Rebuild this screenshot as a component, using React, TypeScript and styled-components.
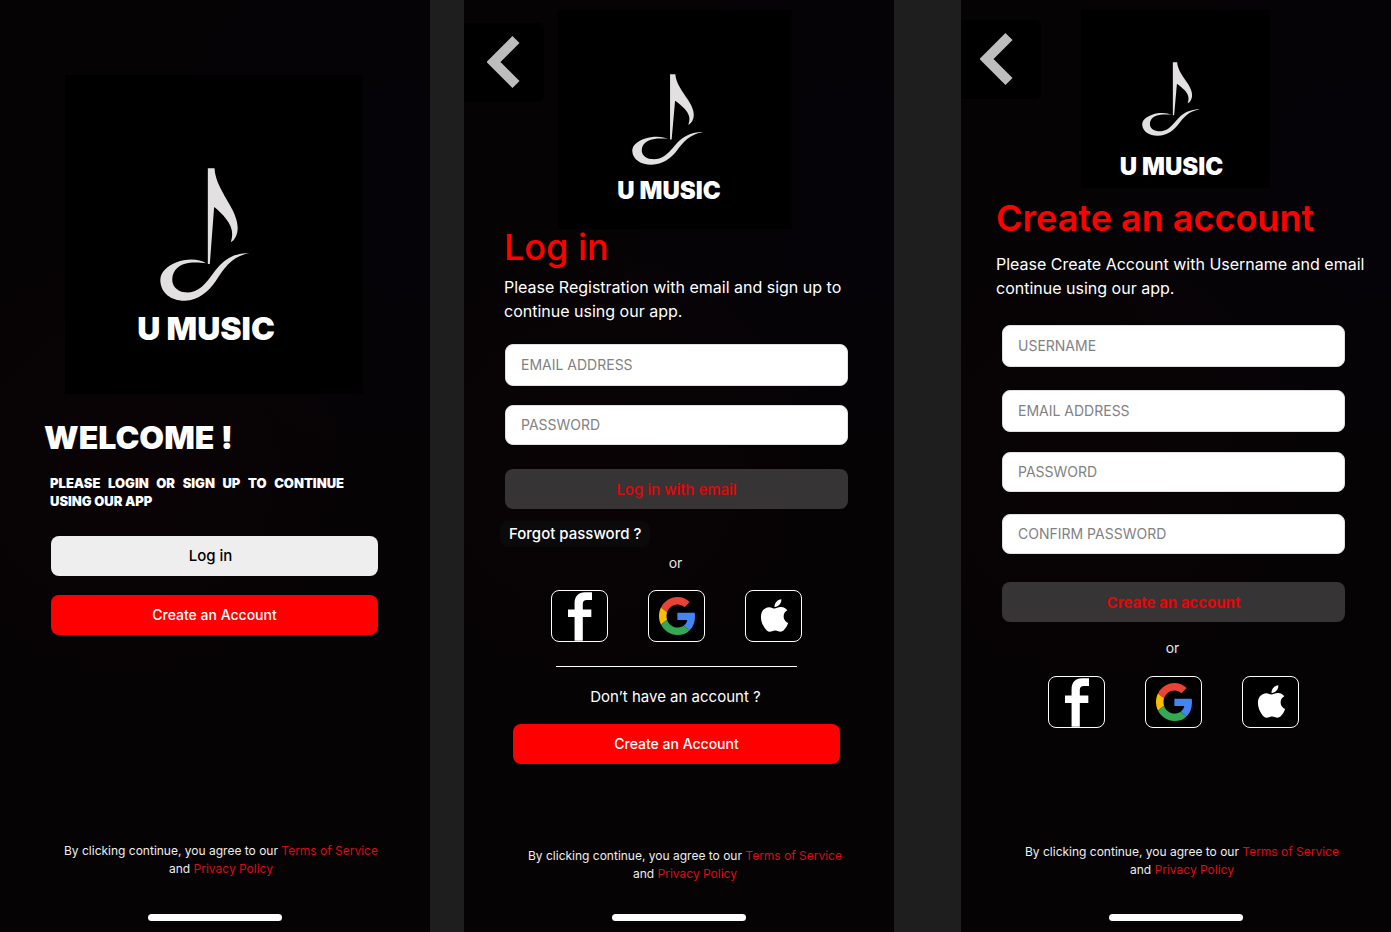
import React from "react";
import styled, { createGlobalStyle } from "styled-components";
import { FaApple } from "react-icons/fa";

const GlobalStyle = createGlobalStyle`
  *, *::before, *::after { box-sizing: border-box; }
  body {
    margin: 0;
    background: #1e1e1e;
    color: #fff;
    font-family: Inter, "Liberation Sans", sans-serif;
  }
  h1, h2, p { margin: 0; }
  button, input { font: inherit; }
`;

const Board = styled.div`
  display: flex;
  min-height: 100vh;
`;

const Screen = styled.main<{ $gap?: number }>`
  flex: 1 1 0;
  min-width: 0;
  margin-left: ${(p) => p.$gap ?? 0}px;
  display: flex;
  flex-direction: column;
  background:
    radial-gradient(circle at 30% 50%, rgba(40, 0, 10, 0.12), transparent 45%),
    radial-gradient(circle at 95% 20%, rgba(0, 0, 30, 0.12), transparent 40%),
    #060305;
`;

const TopBar = styled.header`
  display: grid;
  grid-template-columns: 1fr auto 1fr;
  align-items: start;
  padding-top: 10px;
`;

const BackButton = styled.button<{ $top: number; $indent: number }>`
  width: 80px;
  height: 79px;
  margin-top: ${(p) => p.$top}px;
  padding: 0 0 2px ${(p) => p.$indent}px;
  border: 0;
  border-radius: 0 6px 6px 0;
  background: #000;
  display: flex;
  align-items: center;
  cursor: pointer;
`;

const LogoBox = styled.div<{ $w: number; $h: number; $bottom: number; $right: number; $shift: number }>`
  width: ${(p) => p.$w}px;
  height: ${(p) => p.$h}px;
  margin-right: ${(p) => p.$shift}px;
  padding: 0 ${(p) => p.$right}px ${(p) => p.$bottom}px 0;
  background: #000;
  display: flex;
  flex-direction: column;
  align-items: center;
  justify-content: flex-end;
`;

const Wordmark = styled.span<{ $size: number; $gap: number }>`
  margin-top: ${(p) => p.$gap}px;
  font-size: ${(p) => p.$size}px;
  line-height: ${(p) => p.$size}px;
  font-weight: 900;
  white-space: nowrap;
`;

const WelcomeHero = styled.div`
  display: flex;
  justify-content: center;
  padding-top: 75px;
`;

const WelcomeBody = styled.section`
  padding: 24px 52px 0 51px;
  display: flex;
  flex-direction: column;
`;

const WelcomeTitle = styled.h1`
  margin-left: -7px;
  font-size: 32px;
  line-height: 40px;
  font-weight: 900;
`;

const WelcomeText = styled.p`
  margin: 16px 34px 26px -1px;
  font-size: 13px;
  line-height: 18px;
  font-weight: 900;
  text-align: justify;
`;

const Intro = styled.section<{ $left: number; $top: number; $gap: number; $weight: number }>`
  padding: ${(p) => p.$top}px 20px 0 ${(p) => p.$left}px;

  h1 {
    font-size: 36px;
    line-height: 36px;
    font-weight: ${(p) => p.$weight};
    color: #f00;
  }
  p {
    margin-top: ${(p) => p.$gap}px;
    font-size: 16px;
    line-height: 24px;
  }
`;

const Form = styled.form<{ $top: number }>`
  padding: ${(p) => p.$top}px 46px 0 41px;
  display: flex;
  flex-direction: column;
`;

const Field = styled.input<{ $tall?: boolean; $gap?: number }>`
  width: 100%;
  height: ${(p) => (p.$tall ? 42 : 40)}px;
  margin-top: ${(p) => p.$gap ?? 0}px;
  padding: 0 15px 2px;
  border: 1px solid #e0e0e0;
  border-radius: 8px;
  background: #fff;
  color: #111;
  font-size: 14px;

  &::placeholder {
    color: #828282;
    opacity: 1;
  }
`;

const buttonPadding = { light: "0 24px 2px 16px", red: "0 16px 2px", dark: "0 16px" };

const Button = styled.button<{ $tone: "light" | "red" | "dark"; $top?: number; $bold?: boolean }>`
  width: 100%;
  height: 40px;
  margin-top: ${(p) => p.$top ?? 0}px;
  padding: ${(p) => buttonPadding[p.$tone]};
  border: 0;
  border-radius: 8px;
  cursor: pointer;
  font-size: ${(p) => (p.$tone === "red" ? 14 : 15)}px;
  font-weight: ${(p) => (p.$bold ? 700 : 500)};
  background: ${(p) => ({ light: "#eee", red: "#f00", dark: "#363435" })[p.$tone]};
  color: ${(p) => ({ light: "#000", red: "#fff", dark: "#e60508" })[p.$tone]};
`;

const ForgotLink = styled.a`
  align-self: flex-start;
  margin: 12px 0 0 -5px;
  padding: 0 9px;
  border-radius: 8px;
  background: #0a0a0b;
  color: #fff;
  font-size: 15px;
  line-height: 26px;
  font-weight: 500;
  text-decoration: none;
`;

const Or = styled.p<{ $top: number }>`
  margin-top: ${(p) => p.$top}px;
  padding-right: 2px;
  font-size: 14px;
  line-height: 20px;
  text-align: center;
  color: #e6e6e6;
`;

const SocialRow = styled.div<{ $top: number }>`
  margin-top: ${(p) => p.$top}px;
  display: flex;
  justify-content: center;
  gap: 40px;
`;

const SocialButton = styled.button`
  width: 57px;
  height: 52px;
  padding: 0;
  border: 1px solid #fff;
  border-radius: 8px;
  background: #000;
  color: #fff;
  display: flex;
  align-items: center;
  justify-content: center;
  cursor: pointer;
`;

const AppleButton = styled(SocialButton)`
  padding: 0 0 2px 2px;
`;

const Divider = styled.hr`
  width: 70%;
  height: 1px;
  margin: 24px auto 0;
  border: 0;
  background: #fff;
`;

const SignupPrompt = styled.p`
  margin-top: 20px;
  padding-right: 2px;
  font-size: 15px;
  line-height: 20px;
  text-align: center;
`;

const SignupAction = styled.div`
  padding: 17px 8px 0;
`;

const Footer = styled.footer<{ $gap: number }>`
  margin-top: auto;
  padding-bottom: 11px;
  display: flex;
  flex-direction: column;
  align-items: center;
  gap: ${(p) => p.$gap}px;
`;

const Legal = styled.p`
  max-width: 336px;
  padding-left: 12px;
  font-size: 12px;
  line-height: 18px;
  text-align: center;
  color: #eee;

  a {
    color: #dc0a12;
    text-decoration: none;
  }
`;

const HomeBar = styled.div`
  width: 134px;
  height: 7px;
  border-radius: 4px;
  background: #fff;
`;

type LogoSpec = {
  w: number; h: number; bottom: number; right: number; shift: number;
  noteW: number; noteH: number; text: number; gap: number;
};

function Logo({ w, h, bottom, right, shift, noteW, noteH, text, gap }: LogoSpec) {
  return (
    <LogoBox $w={w} $h={h} $bottom={bottom} $right={right} $shift={shift}>
      <svg width={noteW} height={noteH} viewBox="0 0 280 398" preserveAspectRatio="none" fill="#e2e0e1" aria-hidden="true">
        <path d="M144 1H164C166 40 190 75 211 112C231 146 241 180 228 206C224 214 219 220 213 222C222 196 217 174 198 151C188 139 176 127 163 117L150 287H144Z" />
        <path d="M138 285C120 272 80 270 50 282C20 294 0 312 1 338C3 375 35 398 75 397C115 395 145 372 168 338C194 298 217 264 270 254C235 254 205 265 180 291C160 312 150 335 125 356C108 370 90 374 74 372C48 368 36 350 37 332C38 305 58 288 85 284C105 281 125 283 138 285Z" />
      </svg>
      <Wordmark $size={text} $gap={gap}>U MUSIC</Wordmark>
    </LogoBox>
  );
}

function Back({ top, indent }: { top: number; indent: number }) {
  return (
    <BackButton type="button" aria-label="Back" $top={top} $indent={indent}>
      <svg width="34" height="54" viewBox="0 0 34 54" fill="none" stroke="#bdbdbd" strokeWidth="10">
        <path d="M29 4.5L6.5 27L29 49.5" />
      </svg>
    </BackButton>
  );
}

function SocialLogins({ top }: { top: number }) {
  return (
    <SocialRow $top={top}>
      <SocialButton type="button" aria-label="Continue with Facebook">
        <svg width="24" height="49" viewBox="0 0 73 147" fill="#fff">
          <path d="M73 0H52C31 0 20 13 20 33V52H0V75H20V147H45V75H71V52H45V35C45 27 49 23 57 23H73Z" />
        </svg>
      </SocialButton>
      <SocialButton type="button" aria-label="Continue with Google">
        <svg width="36" height="38" viewBox="0 0 47 48" preserveAspectRatio="none">
          <path fill="#EA4335" d="M24 9.5c3.54 0 6.71 1.22 9.21 3.6l6.85-6.85C35.9 2.38 30.47 0 24 0 14.62 0 6.51 5.38 2.56 13.22l7.98 6.19C12.43 13.72 17.74 9.5 24 9.5z" />
          <path fill="#4285F4" d="M46.98 24.55c0-1.57-.15-3.09-.38-4.55H24v9.02h12.94c-.58 2.96-2.26 5.48-4.78 7.18l7.73 6c4.51-4.18 7.09-10.36 7.09-17.65z" />
          <path fill="#FBBC05" d="M10.53 28.59c-.48-1.45-.76-2.99-.76-4.59s.27-3.14.76-4.59l-7.98-6.19C.92 16.46 0 20.12 0 24c0 3.88.92 7.54 2.56 10.78l7.97-6.19z" />
          <path fill="#34A853" d="M24 48c6.48 0 11.93-2.13 15.89-5.81l-7.73-6c-2.15 1.45-4.92 2.3-8.16 2.3-6.26 0-11.57-4.22-13.47-9.91l-7.98 6.19C6.51 42.62 14.62 48 24 48z" />
        </svg>
      </SocialButton>
      <AppleButton type="button" aria-label="Continue with Apple">
        <FaApple size={37} />
      </AppleButton>
    </SocialRow>
  );
}

function LegalFooter({ gap }: { gap: number }) {
  return (
    <Footer $gap={gap}>
      <Legal>
        By clicking continue, you agree to our <a href="#terms">Terms of Service</a> and{" "}
        <a href="#privacy">Privacy Policy</a>
      </Legal>
      <HomeBar />
    </Footer>
  );
}

export default function App() {
  return (
    <>
      <GlobalStyle />
      <Board>
        <Screen>
          <WelcomeHero>
            <Logo w={298} h={319} bottom={49} right={16} shift={2} noteW={93} noteH={133} text={32} gap={12} />
          </WelcomeHero>
          <WelcomeBody>
            <WelcomeTitle>WELCOME !</WelcomeTitle>
            <WelcomeText>PLEASE LOGIN OR SIGN UP TO CONTINUE USING OUR APP</WelcomeText>
            <Button type="button" $tone="light">Log in</Button>
            <Button type="button" $tone="red" $top={19}>Create an Account</Button>
          </WelcomeBody>
          <LegalFooter gap={36} />
        </Screen>

        <Screen $gap={34}>
          <TopBar>
            <Back top={13} indent={23} />
            <Logo w={234} h={219} bottom={26} right={12} shift={8} noteW={74} noteH={91} text={24} gap={14} />
          </TopBar>
          <Intro $left={40} $top={0} $gap={10} $weight={500}>
            <h1>Log in</h1>
            <p>Please Registration with email and sign up to continue using our app.</p>
          </Intro>
          <Form $top={21}>
            <Field type="email" aria-label="Email address" placeholder="EMAIL ADDRESS" $tall />
            <Field type="password" aria-label="Password" placeholder="PASSWORD" $gap={19} />
            <Button type="button" $tone="dark" $top={24}>Log in with email</Button>
            <ForgotLink href="#forgot">Forgot password ?</ForgotLink>
            <Or $top={6}>or</Or>
            <SocialLogins top={17} />
            <Divider />
            <SignupPrompt>Don’t have an account ?</SignupPrompt>
            <SignupAction>
              <Button type="button" $tone="red">Create an Account</Button>
            </SignupAction>
          </Form>
          <LegalFooter gap={31} />
        </Screen>

        <Screen $gap={67}>
          <TopBar>
            <Back top={10} indent={19} />
            <Logo w={189} h={178} bottom={9} right={8} shift={1} noteW={60} noteH={74} text={24} gap={19} />
          </TopBar>
          <Intro $left={35} $top={12} $gap={16} $weight={600}>
            <h1>Create an account</h1>
            <p>Please Create Account with Username and email continue using our app.</p>
          </Intro>
          <Form $top={25}>
            <Field type="text" aria-label="Username" placeholder="USERNAME" $tall />
            <Field type="email" aria-label="Email address" placeholder="EMAIL ADDRESS" $tall $gap={23} />
            <Field type="password" aria-label="Password" placeholder="PASSWORD" $gap={20} />
            <Field type="password" aria-label="Confirm password" placeholder="CONFIRM PASSWORD" $gap={22} />
            <Button type="button" $tone="dark" $top={28} $bold>Create an account</Button>
            <Or $top={16}>or</Or>
            <SocialLogins top={18} />
          </Form>
          <LegalFooter gap={35} />
        </Screen>
      </Board>
    </>
  );
}
